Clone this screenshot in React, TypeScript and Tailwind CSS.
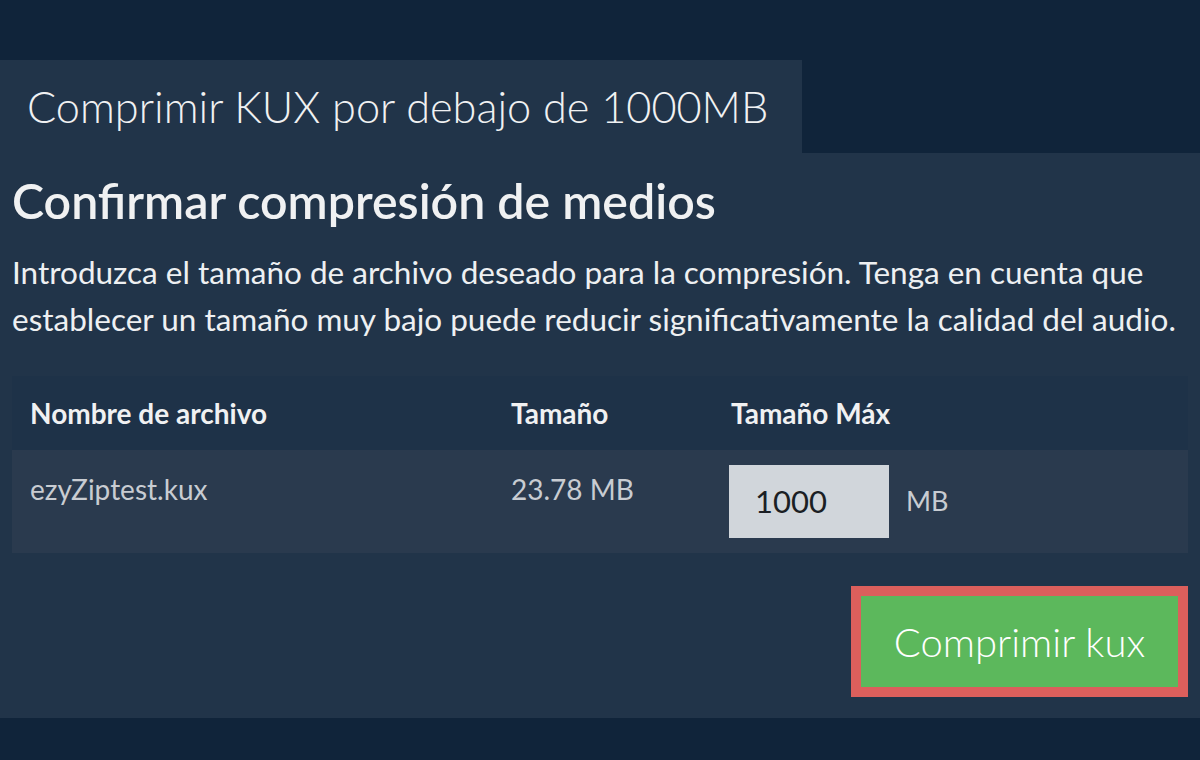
const App = () => {
  return (
    <div
      className="w-[1200px] h-[760px] bg-[#10243a] pt-[60px] text-[#f0f1f2] overflow-hidden"
      style={{ fontFamily: "Lato, 'Open Sans', sans-serif" }}
    >
      <div className="w-[802px] h-[93px] bg-[#213449] flex items-center pl-[27px]">
        <h1 className="text-[43.3px] font-light leading-none">Comprimir KUX por debajo de 1000MB</h1>
      </div>

      <div className="bg-[#213449] h-[565px] px-[12px] pt-[18px]">
        <h2 className="text-[48.3px] font-semibold leading-[58px]">Confirmar compresión de medios</h2>
        <p className="mt-[20px] text-[31.5px] leading-[47px] text-[#eef0f2] whitespace-nowrap">
          Introduzca el tamaño de archivo deseado para la compresión. Tenga en cuenta que
          <br />
          establecer un tamaño muy bajo puede reducir significativamente la calidad del audio.
        </p>

        <div className="mt-[33px]">
          <div className="h-[74px] bg-[#1e3248] flex items-center font-bold text-[28px] pl-[18px]">
            <div className="w-[481px]">Nombre de archivo</div>
            <div className="w-[218px]">Tamaño</div>
            <div className="pl-[2px]">Tamaño Máx</div>
          </div>
          <div className="h-[103px] bg-[#2a3a4e] flex text-[28px] text-[#c8ccd2] pl-[18px]">
            <div className="w-[481px] pt-[18px]">ezyZiptest.kux</div>
            <div className="w-[218px] pt-[18px]">23.78 MB</div>
            <div className="flex items-center h-[73px] mt-[15px]">
              <div className="w-[160px] h-[73px] bg-[#d1d6db] text-[#1b1f24] text-[31px] flex items-center pl-[26px]">
                1000
              </div>
              <span className="ml-[17px] text-[#c8ccd2] text-[27px]">MB</span>
            </div>
          </div>
        </div>

        <div className="flex justify-end mt-[33px]">
          <button className="w-[337px] h-[111px] border-[10px] border-[#dc5f5c] bg-[#5cb85c] text-white text-[40px] font-light">
            Comprimir kux
          </button>
        </div>
      </div>
    </div>
  );
};

export default App;
